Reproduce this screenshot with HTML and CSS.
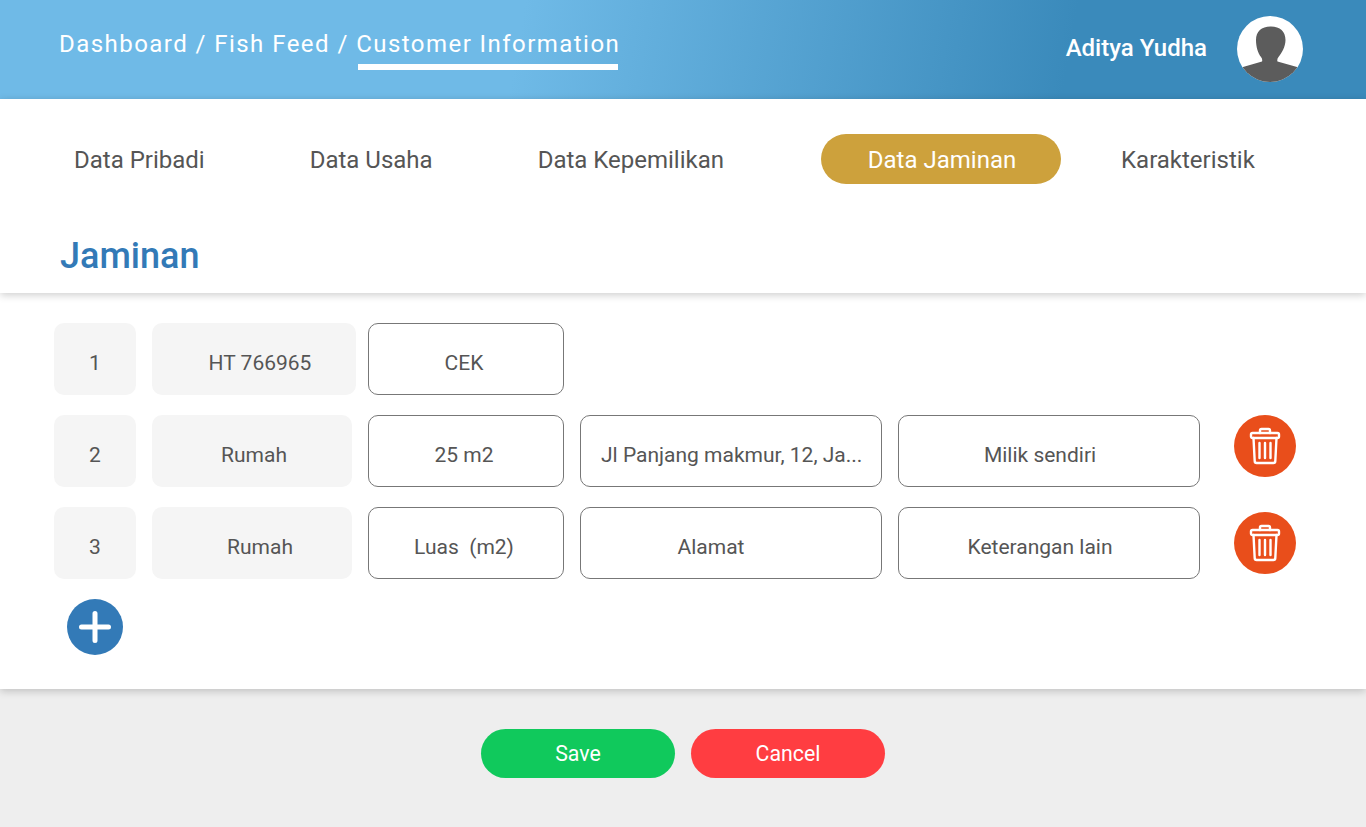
FILE: index.html
```html
<!DOCTYPE html>
<html lang="id">
<head>
  <meta charset="UTF-8">
  <meta name="viewport" content="width=device-width, initial-scale=1">
  <title>Customer Information - Data Jaminan</title>
  <link rel="stylesheet" href="styles.css">
</head>
<body>

<header class="topbar">
  <div class="breadcrumb">
    <span>Dashboard / Fish Feed / </span><span class="crumb-active">Customer Information</span>
  </div>
  <div class="user">
    <span class="user-name">Aditya Yudha</span>
    <svg class="avatar" viewBox="0 0 66 66" width="66" height="66">
      <defs>
        <clipPath id="avatar-clip"><circle cx="33" cy="33" r="33"/></clipPath>
      </defs>
      <circle cx="33" cy="33" r="33" fill="#fff"/>
      <g clip-path="url(#avatar-clip)" fill="#5c5c5c">
        <path d="M33.500 10.500c-9 0-14.500 5-14.500 13.500 0 7 2 13 5 17 1.200 1.600 1.500 3 1 4.500L6 51 3 70h60l-3-19-19.500-5.500c-.5-1.500-.2-2.900 1-4.500 3-4 7-10 7-17 0-8.500-5.500-13.500-14.500-13.500z"/>
      </g>
    </svg>
  </div>
</header>

<section class="top-card">
  <nav class="tabs">
    <a class="tab tab-pribadi">Data Pribadi</a>
    <a class="tab tab-usaha">Data Usaha</a>
    <a class="tab tab-milik">Data Kepemilikan</a>
    <a class="tab tab-active">Data Jaminan</a>
    <a class="tab tab-karakter">Karakteristik</a>
  </nav>
  <h1 class="title">Jaminan</h1>
</section>

<section class="form-card">
  <div class="row">
    <div class="cell cell-no">1</div>
    <div class="cell cell-type cell-wide pad-left-12">HT 766965</div>
    <div class="cell cell-input cell-small pad-right-4">CEK</div>
  </div>

  <div class="row">
    <div class="cell cell-no">2</div>
    <div class="cell cell-type pad-left-4">Rumah</div>
    <div class="cell cell-input cell-small pad-right-4">25 m2</div>
    <div class="cell cell-input cell-big cell-left">Jl Panjang makmur, 12, Ja...</div>
    <div class="cell cell-input cell-big pad-right-18">Milik sendiri</div>
    <button class="btn-delete">
      <svg viewBox="0 0 32 38" width="32" height="38" fill="none" stroke="#fff" stroke-width="2.400" stroke-linejoin="round" stroke-linecap="round">
        <path d="M11 6V3.500A1.500 1.500 0 0 1 12.500 2h7A1.500 1.500 0 0 1 21 3.500V6"/>
        <rect x="2" y="6" width="28" height="5" rx="1.500"/>
        <path d="M4.500 11l1.200 23a2 2 0 0 0 2 2h16.600a2 2 0 0 0 2-2L27.500 11"/>
        <path d="M10.500 16v15M16 16v15M21.500 16v15"/>
      </svg>
    </button>
  </div>

  <div class="row">
    <div class="cell cell-no">3</div>
    <div class="cell cell-type pad-left-16">Rumah</div>
    <div class="cell cell-input cell-small pad-right-4">Luas&nbsp; (m2)</div>
    <div class="cell cell-input cell-big pad-right-40">Alamat</div>
    <div class="cell cell-input cell-big pad-right-18">Keterangan lain</div>
    <button class="btn-delete btn-delete-low">
      <svg viewBox="0 0 32 38" width="32" height="38" fill="none" stroke="#fff" stroke-width="2.400" stroke-linejoin="round" stroke-linecap="round">
        <path d="M11 6V3.500A1.500 1.500 0 0 1 12.500 2h7A1.500 1.500 0 0 1 21 3.500V6"/>
        <rect x="2" y="6" width="28" height="5" rx="1.500"/>
        <path d="M4.500 11l1.200 23a2 2 0 0 0 2 2h16.600a2 2 0 0 0 2-2L27.500 11"/>
        <path d="M10.500 16v15M16 16v15M21.500 16v15"/>
      </svg>
    </button>
  </div>

  <button class="btn-add">
    <svg viewBox="0 0 56 56" width="56" height="56" stroke="#fff" stroke-width="5" stroke-linecap="round">
      <path d="M28 14.500v27M14.500 28h27"/>
    </svg>
  </button>
</section>

<div class="actions">
  <button class="btn btn-save">Save</button>
  <button class="btn btn-cancel">Cancel</button>
</div>

</body>
</html>
```

FILE: styles.css
```css
* {
  box-sizing: border-box;
}
body {
  font-family: Roboto, "Liberation Sans", sans-serif;
  background-color: #eeeeee;
  margin: 0;
  padding: 0;
  height: 827px;
  overflow: hidden;
}
.topbar {
  height: 99px;
  background: linear-gradient(100deg, #6fbae7 0%, #6fbae7 38%, #3a8abb 78%, #3a8abb 100%);
  color: white;
  display: flex;
  justify-content: space-between;
  padding: 16px 63px 0 59px;
}
.breadcrumb {
  font-size: 24px;
  letter-spacing: 1.45px;
  line-height: 28px;
  padding-top: 14px;
  white-space: nowrap;
}
.crumb-active {
  display: inline-block;
  height: 38px;
  position: relative;
}
.crumb-active::after {
  content: "";
  position: absolute;
  left: 2px;
  right: 2px;
  top: 34px;
  height: 6px;
  background-color: white;
}
.user {
  display: flex;
  align-items: flex-start;
  gap: 30px;
}
.user-name {
  font-size: 24px;
  font-weight: 500;
  line-height: 26px;
  margin-top: 19px;
}
.avatar {
  display: block;
}
.top-card {
  background-color: white;
  height: 194px;
  position: relative;
  box-shadow: 0 2px 8px rgba(0,0,0,0.2);
  padding-top: 35px;
}
.tabs {
  display: flex;
  height: 50px;
  align-items: center;
  font-size: 24px;
  color: #555555;
}
.tab {
  white-space: nowrap;
  padding-top: 2px;
}
.tab-pribadi {
  margin-left: 74px;
}
.tab-usaha {
  margin-left: 105px;
}
.tab-milik {
  margin-left: 105px;
}
.tab-active {
  margin-left: 97px;
  width: 240px;
  height: 50px;
  padding: 0 0 0 2px;
  line-height: 52px;
  text-align: center;
  background-color: #cda13c;
  color: white;
  border-radius: 25px;
}
.tab-karakter {
  margin-left: 60px;
}
.title {
  margin: 0;
  padding: 51px 0 0 60px;
  color: #337ab7;
  font-size: 36px;
  font-weight: 500;
  line-height: 42px;
}
.form-card {
  background-color: white;
  height: 396px;
  padding: 30px 0 0 54px;
  box-shadow: 0 2px 8px rgba(0,0,0,0.2);
}
.row {
  display: flex;
  gap: 16px;
  height: 72px;
  margin-bottom: 20px;
}
.cell {
  height: 72px;
  border-radius: 10px;
  display: flex;
  align-items: center;
  justify-content: center;
  padding-top: 8px;
  font-size: 21px;
  color: #555555;
  white-space: nowrap;
}
.cell-no {
  width: 82px;
  background-color: #f5f5f5;
}
.cell-type {
  width: 200px;
  background-color: #f5f5f5;
}
.cell-wide {
  width: 204px;
  margin-right: -4px;
}
.cell-input {
  background-color: white;
  border: 1px solid #777777;
}
.cell-small {
  width: 196px;
}
.cell-big {
  width: 302px;
}
.cell-left {
  justify-content: flex-start;
  padding-left: 20px;
}
.pad-left-4 {
  padding-left: 4px;
}
.pad-left-12 {
  padding-left: 12px;
}
.pad-left-16 {
  padding-left: 16px;
}
.pad-right-4 {
  padding-right: 4px;
}
.pad-right-18 {
  padding-right: 18px;
}
.pad-right-40 {
  padding-right: 40px;
}
button {
  border: none;
  padding: 0;
  cursor: pointer;
}
.btn-delete {
  width: 62px;
  height: 62px;
  margin-left: 18px;
  border-radius: 50%;
  background-color: #e94e1b;
  display: flex;
  align-items: center;
  justify-content: center;
}
.btn-delete-low {
  margin-top: 5px;
}
.btn-add {
  display: block;
  width: 56px;
  height: 56px;
  margin: 1px 0 0 13px;
  border-radius: 50%;
  background-color: #337ab7;
}
.btn-add svg {
  display: block;
}
.actions {
  display: flex;
  justify-content: center;
  gap: 16px;
  padding: 40px 0 0 0;
}
.btn {
  width: 194px;
  height: 49px;
  border-radius: 25px;
  color: white;
  font-family: inherit;
  font-size: 21.300px;
}
.btn-save {
  background-color: #10c95c;
}
.btn-cancel {
  background-color: #ff3d41;
}
```
